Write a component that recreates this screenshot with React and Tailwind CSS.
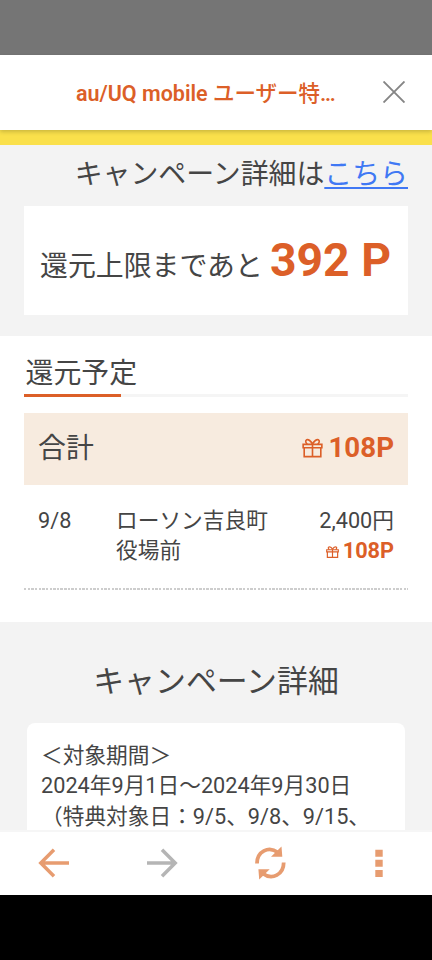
const DETAILS = [
  "＜対象期間＞",
  "2024年9月1日～2024年9月30日",
  "（特典対象日：9/5、9/8、9/15、",
];

const PURCHASES = [
  { date: "9/8", shop: "ローソン吉良町役場前", price: "2,400円", points: "108P" },
];

function GiftIcon({ className }) {
  return (
    <svg viewBox="0 0 22 20" fill="none" stroke="currentColor" className={className}>
      <path d="M1.2 6.2h19.6v3.6H1.2zM2.3 9.8h17.4v9.2H2.3zM11 6.2V19" />
      <path d="M11 6C9.5 2.6 6.6.6 4.9 1.4 3.2 2.3 3.8 4.8 5.6 6M11 6c1.5-3.4 4.4-5.4 6.1-4.6C18.8 2.3 18.2 4.8 16.4 6" />
    </svg>
  );
}

function Header() {
  return (
    <header className="relative flex h-[75.5px] items-center bg-white shadow-[0_2px_4px_rgba(0,0,0,0.18)]">
      <h1 className="ml-[76px] w-[262px] pt-[4px] text-[21.5px] leading-8 font-semibold whitespace-nowrap text-[#dc5f28]">
        au/UQ mobile <span className="font-medium">ユーザー特</span>…
      </h1>
      <button className="ml-[45px]">
        <svg viewBox="0 0 22 22" className="h-[22px] w-[22px]" stroke="#858585" strokeWidth="1.9">
          <path d="M.5.5l21 21M21.5.5l-21 21" />
        </svg>
      </button>
    </header>
  );
}

function Limit() {
  return (
    <section className="h-[191px] bg-[#f3f3f3] px-6 pt-[10px]">
      <p className="h-[51px] text-right text-[27.9px] leading-[40px] whitespace-nowrap">
        キャンペーン詳細は
        <a href="#detail" className="text-[#4078f4] underline decoration-2 underline-offset-[3px]">こちら</a>
      </p>
      <div className="flex h-[108.5px] items-baseline justify-between bg-white pr-[17px] pl-4 whitespace-nowrap">
        <span className="text-[27.9px]">還元上限まであと</span>
        <strong className="text-[46.3px] leading-[108px] font-bold text-[#dc5f28]">392 P</strong>
      </div>
    </section>
  );
}

function Schedule() {
  return (
    <section className="h-[286px] bg-white px-6 pt-[18px]">
      <h2 className="h-[40px] pl-[1.5px] text-[27.9px] leading-10">還元予定</h2>
      <div className="h-[3px] bg-[#f5f5f5]">
        <div className="h-full w-[97px] bg-[#dc5f28]" />
      </div>
      <div className="mt-4 flex h-[72px] items-center justify-between bg-[#f7ebdf] px-[14px]">
        <span className="text-[27.9px] leading-10">合計</span>
        <span className="flex items-center gap-[5px] pb-[2px] text-[27.7px] leading-10 font-bold text-[#dc5f28]">
          <GiftIcon className="h-[20px] w-[21px] stroke-[1.7]" />
          108P
        </span>
      </div>
      {PURCHASES.map((item) => (
        <div key={item.date}>
          <div className="flex h-[103px] px-[14px] pt-[20.5px] text-[21.7px] leading-[30.5px]">
            <span className="w-[78px]">{item.date}</span>
            <span className="w-[153px]">{item.shop}</span>
            <div className="flex flex-1 flex-col items-end">
              <span>{item.price}</span>
              <span className="flex items-center gap-[4px] font-bold text-[#dc5f28]">
                <GiftIcon className="mt-[2px] h-[12px] w-[13px] stroke-2" />
                {item.points}
              </span>
            </div>
          </div>
          <div className="h-[2px] bg-[repeating-linear-gradient(90deg,#cdcdcd_0_2.4px,transparent_2.4px_3.65px)]" />
        </div>
      ))}
    </section>
  );
}

function CampaignDetail() {
  return (
    <section id="detail" className="h-[208px] overflow-hidden bg-[#f3f3f3] px-[27px] pt-[40px]">
      <h2 className="h-[60.5px] text-center text-[30.9px] leading-10">キャンペーン詳細</h2>
      <div className="h-[200px] rounded-lg bg-white px-[14px] pt-[18px] text-[21.7px] leading-[30.8px] whitespace-nowrap">
        {DETAILS.map((line) => (
          <p key={line}>{line}</p>
        ))}
      </div>
    </section>
  );
}

function BottomNav() {
  return (
    <nav className="flex h-[65px] items-center justify-around border-t-2 border-[#f6f6f6] bg-white pb-[2px] text-[#e79c70]">
      <svg viewBox="0 0 32 32" className="h-8 w-8" fill="none" stroke="currentColor" strokeWidth="3.5">
        <path d="M31 16H3M16 2.8L2.8 16 16 29.2" />
      </svg>
      <svg viewBox="0 0 32 32" className="h-8 w-8 text-[#b5b5b5]" fill="none" stroke="currentColor" strokeWidth="3.5">
        <path d="M1 16h28M16 2.8L29.2 16 16 29.2" />
      </svg>
      <svg viewBox="0 0 32 34" className="h-[34px] w-8" fill="none" stroke="currentColor" strokeWidth="3.8">
        <path d="M3 17.5C3 5.5 14.5-.5 24 6.5M29.700 16.500C29.700 28.500 18.200 34.500 8.700 27.500" />
        <path d="M27.500.5l.8 10.300H17zM5.200 33.500L4.400 23.200H15.700z" fill="currentColor" stroke="none" />
      </svg>
      <svg viewBox="0 0 8 28" className="mr-[11px] ml-[13px] h-7 w-2" fill="currentColor">
        <path d="M.3.7h7.400v7H.3zM.3 10.700h7.400v7H.3zM.3 20.900h7.400v7H.3z" />
      </svg>
    </nav>
  );
}

export default function App() {
  return (
    <div className="h-[960px] w-[432px] overflow-hidden bg-black font-['Roboto','Noto_Sans_CJK_JP',sans-serif] text-[#454545]">
      <div className="h-[54.5px] bg-[#757575]" />
      <Header />
      <div className="h-[15px] bg-[#fae04b]" />
      <Limit />
      <Schedule />
      <CampaignDetail />
      <BottomNav />
    </div>
  );
}
